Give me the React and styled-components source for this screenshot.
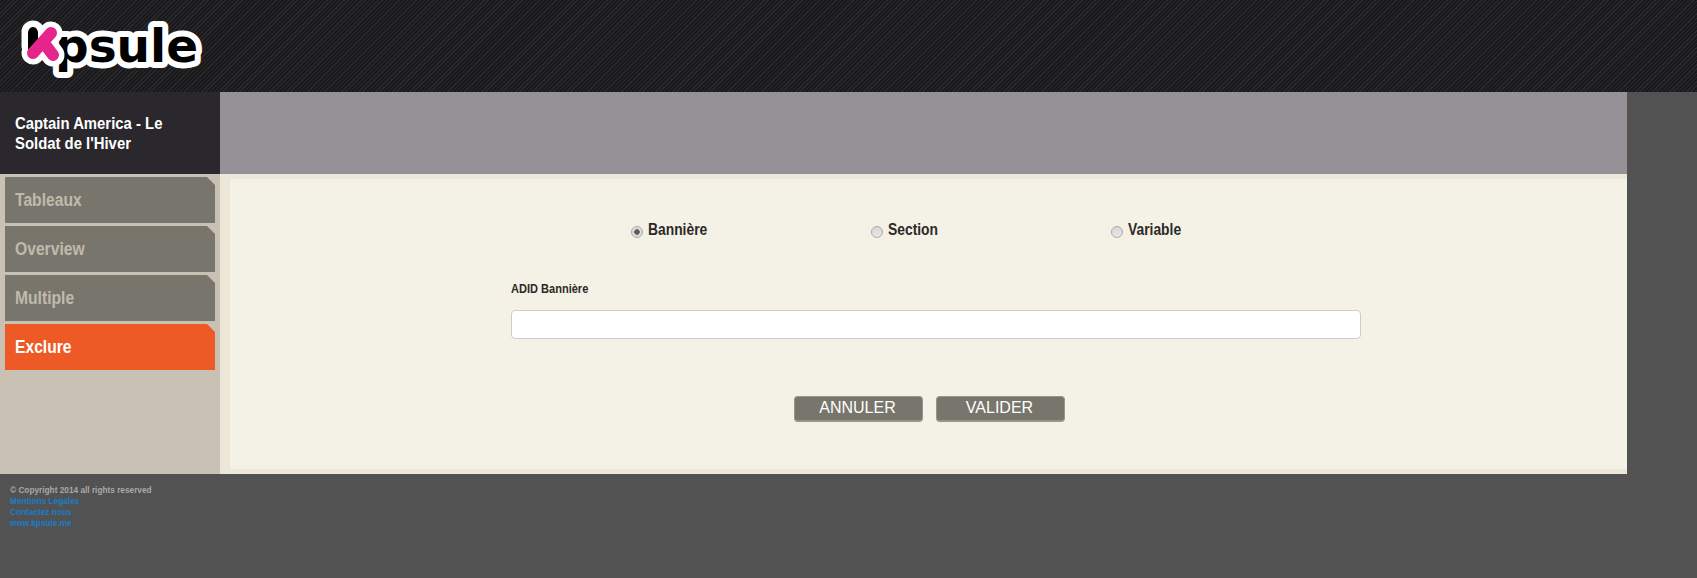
import React from 'react'
import styled, { createGlobalStyle } from 'styled-components'

const Global = createGlobalStyle`
  html, body { margin: 0; padding: 0; background: #525252; }
  body { font-family: 'Liberation Sans', Arial, sans-serif; }
`
// the reference text is taller than it is wide, no narrow font is installed
const Narrow = styled.span`
  display: block;
  white-space: ${p => (p.$wrap ? 'normal' : 'nowrap')};
  transform: scaleX(${p => p.$x});
  transform-origin: left center;
`
const Header = styled.header`
  height: 92px;
  background-color: #1f1e21;
  background-image: repeating-linear-gradient(135deg, #2a292c 0, #2a292c 1px, #1a191c 1px, #1a191c 3px);
`
const LogoSvg = styled.svg`
  display: block;
  width: 220px;
  height: 92px;
`
const LogoText = styled.text`
  font-family: 'DejaVu Sans', sans-serif;
  font-weight: 700;
  font-size: 47px;
  fill: #000;
  stroke: #fff;
  stroke-width: 12px;
  stroke-linejoin: round;
  paint-order: stroke;
`
const Page = styled.div`
  width: 1627px;
`
const TitleRow = styled.div`
  display: flex;
  height: 82px;
  background: #949296;
`
const Title = styled.h1`
  box-sizing: border-box;
  width: 220px;
  margin: 0;
  padding: 22px 15px 0;
  background: #2a282c;
  color: #fff;
  font-size: 17px;
  line-height: 20px;
  font-weight: 700;
  overflow: hidden;
`
const TitleText = styled(Narrow)`
  width: 180px;
`
const Body = styled.div`
  display: flex;
  height: 300px;
`
const Sidebar = styled.nav`
  box-sizing: border-box;
  width: 220px;
  padding: 3px 5px 0;
  background: #c9c2b4;
  display: flex;
  flex-direction: column;
  gap: 3px;
`
const Tab = styled.a`
  box-sizing: border-box;
  height: 46px;
  padding: 1px 0 0 10px;
  display: flex;
  align-items: center;
  font-size: 18px;
  font-weight: 700;
  color: ${p => (p.$active ? '#fff' : '#c0baab')};
  background: ${p => (p.$active ? '#ee5a26' : '#78756d')};
  clip-path: polygon(0 0, 202px 0, 100% 8px, 100% 100%, 0 100%);
`
const Content = styled.main`
  flex: 1;
  box-sizing: border-box;
  padding: 5px 0 5px 10px;
  background: #ece7d8;
`
const Inner = styled.div`
  height: 100%;
  background: #f4f1e6;
  padding-top: 41px;
  box-sizing: border-box;
`
const Form = styled.form`
  width: 850px;
  margin-left: 281px;
`
const Radios = styled.div`
  display: flex;
  padding-left: 120px;
`
const RadioLabel = styled.label`
  width: 240px;
  height: 20px;
  display: flex;
  align-items: center;
  gap: 5px;
  font-size: 16px;
  font-weight: 700;
  color: #2b2a28;
`
const Radio = styled.input`
  appearance: none;
  box-sizing: border-box;
  width: 12px;
  height: 12px;
  margin: 4px 0 0;
  border: 1px solid #a9a9a9;
  border-radius: 50%;
  background: ${p => (p.checked
    ? 'radial-gradient(circle, #5d5d5d 0, #5d5d5d 2.5px, #dcdcdc 3px)'
    : 'linear-gradient(#d6d6d6, #e8e8e8)')};
`
const FieldLabel = styled.label`
  display: block;
  margin-top: 42px;
  font-size: 12px;
  line-height: 14px;
  font-weight: 700;
  color: #2b2a28;
`
const TextInput = styled.input`
  display: block;
  box-sizing: border-box;
  width: 100%;
  height: 29px;
  margin-top: 14px;
  background: #fff;
  border: 1px solid #cfcdc8;
  border-radius: 4px;
`
const Buttons = styled.div`
  display: flex;
  justify-content: center;
  gap: 13px;
  margin: 57px 0 0 2px;
`
const Button = styled.button`
  box-sizing: border-box;
  width: 129px;
  height: 26px;
  padding: 0 2px 1px 0;
  background: #78756d;
  color: #fff;
  border: 1px solid #96948f;
  border-bottom-width: 2px;
  border-radius: 4px;
  font-family: 'Liberation Sans', Arial, sans-serif;
  font-size: 16px;
`
const Footer = styled.footer`
  padding: 10px 10px 0;
  font-size: 9.5px;
  line-height: 11px;
  font-weight: 700;
  color: #a9a9a9;
`
const FooterLink = styled.a`
  display: block;
  color: #1a7cc9;
`

const tabs = ['Tableaux', 'Overview', 'Multiple', 'Exclure']
const kinds = ['Bannière', 'Section', 'Variable']
const links = ['Mentions Légales', 'Contactez nous', 'www.kpsule.me']

const Logo = () => (
  <LogoSvg viewBox="0 0 220 92">
    <LogoText x="55" y="62">psule</LogoText>
    <g fill="none" strokeLinecap="round" strokeLinejoin="round">
      <path d="M33 32 L33 46 M51 33 L33 53 M44 43 L53 55" stroke="#fff" strokeWidth="23" />
      <path d="M33 27 C36 27 38 30 38 33 L38 40 L28 50 L28 33 C28 30 30 27 33 27 Z" fill="#000" />
      <path d="M51 33 L33 53 M44 43 L53 55" stroke="#e5258c" strokeWidth="12" />
    </g>
  </LogoSvg>
)

export default function App() {
  return (
    <>
      <Global />
      <Header><Logo /></Header>
      <Page>
        <TitleRow>
          <Title>
            <TitleText $x={0.875} $wrap>Captain America - Le Soldat de l'Hiver</TitleText>
          </Title>
        </TitleRow>
        <Body>
          <Sidebar>
            {tabs.map(t => (
              <Tab key={t} $active={t === 'Exclure'}><Narrow $x={0.87}>{t}</Narrow></Tab>
            ))}
          </Sidebar>
          <Content>
            <Inner>
              <Form>
                <Radios>
                  {kinds.map(k => (
                    <RadioLabel key={k}>
                      <Radio type="radio" name="kind" checked={k === 'Bannière'} readOnly />
                      <Narrow $x={0.865}>{k}</Narrow>
                    </RadioLabel>
                  ))}
                </Radios>
                <FieldLabel><Narrow $x={0.92}>ADID Bannière</Narrow></FieldLabel>
                <TextInput type="text" />
              </Form>
              <Buttons>
                <Button type="button">ANNULER</Button>
                <Button type="button">VALIDER</Button>
              </Buttons>
            </Inner>
          </Content>
        </Body>
      </Page>
      <Footer>
        <Narrow $x={0.87}>© Copyright 2014 all rights reserved</Narrow>
        {links.map(l => (
          <FooterLink key={l}><Narrow $x={0.87}>{l}</Narrow></FooterLink>
        ))}
      </Footer>
    </>
  )
}
